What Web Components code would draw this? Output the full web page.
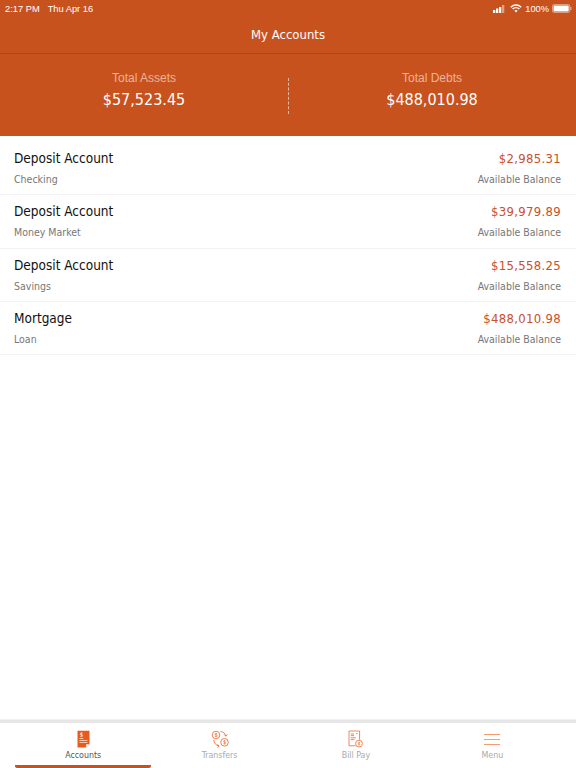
<!DOCTYPE html>
<html>
<head>
<meta charset="utf-8">
<title>My Accounts</title>
<style>
  html, body { margin: 0; padding: 0; height: 100%; background: #fff; }
  body { font-family: "DejaVu Sans", "Liberation Sans", sans-serif; font-stretch: condensed; overflow: hidden; }
  my-app { height: 768px; }
</style>
</head>
<body>
<my-app>
  <status-bar slot="top"></status-bar>
  <app-title slot="top">My Accounts</app-title>
  <total-summary slot="top">
    <total-item label="Total Assets" amount="$57,523.45"></total-item>
    <total-item label="Total Debts" amount="$488,010.98"></total-item>
  </total-summary>

  <account-row name="Deposit Account" type="Checking" amount="$2,985.31"></account-row>
  <account-row name="Deposit Account" type="Money Market" amount="$39,979.89"></account-row>
  <account-row name="Deposit Account" type="Savings" amount="$15,558.25"></account-row>
  <account-row name="Mortgage" type="Loan" amount="$488,010.98"></account-row>

  <tab-bar slot="bottom">
    <tab-item label="Accounts" active>
      <svg viewBox="0 0 14 18" width="14" height="18">
        <path d="M1.5 .8h12v13.4L10.2 17.6H1.5z" fill="#ea5a1c"/>
        <path d="M10.2 17.6v-3.4h3.3z" fill="#fff"/>
        <rect x="3.4" y="8" width="4" height="1" fill="#f9c6a8"/>
        <rect x="3.4" y="10" width="8" height="1" fill="#f9c6a8"/>
        <rect x="3.4" y="12" width="8" height="1" fill="#f9c6a8"/>
        <path d="M5.4 2.4v4M6.6 3.2H5a.8.8 0 0 0 0 1.6h.8a.8.8 0 0 1 0 1.6H4.3" fill="none" stroke="#fff" stroke-width=".7"/>
      </svg>
    </tab-item>
    <tab-item label="Transfers">
      <svg viewBox="0 0 18 18" width="18" height="18" fill="none" stroke="#f0703a" stroke-width=".9">
        <circle cx="5" cy="5" r="3.8"/>
        <circle cx="13.5" cy="12.3" r="3.8"/>
        <path d="M9.8 1.5c2.6.3 4.6 2 5 4.4M13.5 4.8l1.3 1.3 1.4-1.3M2.8 10.2c.1 2.8 2 5.2 5 5.8M6.6 17.2l1.4-1.2-1.2-1.4" stroke-linecap="round" stroke-linejoin="round"/>
        <path d="M6.1 3.5H4.6a.7.7 0 0 0 0 1.5h.8a.7.7 0 0 1 0 1.5H3.8M5 2.8v4.4M14.6 10.8h-1.5a.7.7 0 0 0 0 1.5h.8a.7.7 0 0 1 0 1.5h-1.6M13.5 10.1v4.4" stroke-width=".6"/>
      </svg>
    </tab-item>
    <tab-item label="Bill Pay">
      <svg viewBox="0 0 15 18" width="15" height="18" fill="none" stroke="#f0784a" stroke-width=".9">
        <path d="M7.4 15.8H1V1h10.6v8.8"/>
        <path d="M2.8 4h3.2M2.8 5.6h3.2M2.8 7.8h5M2.8 9.6h3.6M8 3.6h1.5"/>
        <circle cx="11" cy="13.6" r="3.4"/>
        <path d="M12 12.5h-1.2a.6.6 0 0 0 0 1.2h.5a.6.6 0 0 1 0 1.2h-1.2M11 11.8v3.7" stroke-width=".6"/>
      </svg>
    </tab-item>
    <tab-item label="Menu">
      <svg viewBox="0 0 16 18" width="16" height="18" fill="#f79a6c">
        <rect y="4" width="16" height="1"/>
        <rect y="9" width="16" height="1"/>
        <rect y="14" width="16" height="1"/>
      </svg>
    </tab-item>
  </tab-bar>
</my-app>

<script>
class MyApp extends HTMLElement {
  constructor() {
    super();
    this.attachShadow({ mode: "open" }).innerHTML = `
      <style>
        :host { display: flex; flex-direction: column; width: 100%; }
        .top { background: #c8521e; }
        .list { flex: 1; padding-top: 6px; }
      </style>
      <div class="top"><slot name="top"></slot></div>
      <div class="list"><slot></slot></div>
      <slot name="bottom"></slot>
    `;
  }
}

class StatusBar extends HTMLElement {
  constructor() {
    super();
    this.attachShadow({ mode: "open" }).innerHTML = `
      <style>
        :host {
          display: flex; justify-content: space-between; align-items: center;
          height: 17px; padding: 0 4px 0 5px; color: #fff;
          font: 9.3px "Liberation Sans", sans-serif; font-stretch: normal;
        }
        .left { display: flex; gap: 8px; }
        .right { display: flex; align-items: center; gap: 5px; }
        .pct { margin-left: -2px; margin-right: -2px; }
        svg { display: block; }
      </style>
      <div class="left"><span>2:17 PM</span><span>Thu Apr 16</span></div>
      <div class="right">
        <svg width="12" height="8" viewBox="0 0 12 8">
          <rect x="0" y="5" width="2.3" height="3" fill="#fff"/>
          <rect x="3" y="3.5" width="2.3" height="4.5" fill="#fff"/>
          <rect x="6" y="2" width="2.3" height="6" fill="#fff"/>
          <rect x="9" y="0" width="2.3" height="8" fill="#fff" opacity=".45"/>
        </svg>
        <svg width="12" height="9" viewBox="0 0 12 9" fill="none" stroke="#fff" stroke-width="1.4">
          <path d="M.8 3.2a7.4 7.4 0 0 1 10.4 0M2.6 5a4.8 4.8 0 0 1 6.8 0"/>
          <path d="M4.4 6.7a2.3 2.3 0 0 1 3.2 0L6 8.4z" fill="#fff" stroke="none"/>
        </svg>
        <span class="pct">100%</span>
        <svg width="20" height="9" viewBox="0 0 20 9">
          <rect x=".4" y=".4" width="17.4" height="8.2" rx="2" fill="none" stroke="#fff" stroke-opacity=".6" stroke-width=".8"/>
          <rect x="1.5" y="1.5" width="15.2" height="6" rx="1" fill="#fff"/>
          <rect x="18.4" y="3" width="1" height="3" fill="#fff" opacity=".6"/>
        </svg>
      </div>
    `;
  }
}

class AppTitle extends HTMLElement {
  constructor() {
    super();
    this.attachShadow({ mode: "open" }).innerHTML = `
      <style>
        :host {
          display: block; height: 36px; line-height: 35px; text-align: center;
          color: #fff; font-size: 13px;
          border-bottom: 1px solid #ad4519;
        }
      </style>
      <slot></slot>
    `;
  }
}

class TotalSummary extends HTMLElement {
  constructor() {
    super();
    this.attachShadow({ mode: "open" }).innerHTML = `
      <style>
        :host { display: grid; grid-template-columns: 1fr 1fr; height: 82px; position: relative; }
        .rule {
          position: absolute; left: 288px; top: 24px; height: 36px;
          border-left: 1px dashed #e8b8a0;
        }
      </style>
      <slot></slot>
      <div class="rule"></div>
    `;
  }
}

class TotalItem extends HTMLElement {
  constructor() {
    super();
    this.attachShadow({ mode: "open" }).innerHTML = `
      <style>
        :host { display: block; text-align: center; padding-top: 17px; }
        .label { color: #efb396; font: 12px/14px "Liberation Sans", sans-serif; font-stretch: normal; }
        .amount { color: #fff; font-size: 16px; line-height: 24px; margin-top: 3px; }
      </style>
      <div class="label">${this.getAttribute("label")}</div>
      <div class="amount">${this.getAttribute("amount")}</div>
    `;
  }
}

class AccountRow extends HTMLElement {
  constructor() {
    super();
    this.attachShadow({ mode: "open" }).innerHTML = `
      <style>
        :host {
          display: grid; grid-template-columns: 1fr auto; align-items: center;
          height: 53.3px; box-sizing: border-box; padding: 4px 15px 0 14px;
          border-bottom: 1px solid #f3f3f3; grid-template-rows: 24px 18px;
        }
        .name { color: #111; font-size: 13.5px; }
        .amount { color: #c8502a; font-size: 13px; letter-spacing: .3px; text-align: right; padding-top: 1px; }
        .sub { color: #777; font-size: 10.5px; }
        .sub.right { text-align: right; }
      </style>
      <div class="name">${this.getAttribute("name")}</div>
      <div class="amount">${this.getAttribute("amount")}</div>
      <div class="sub">${this.getAttribute("type")}</div>
      <div class="sub right">Available Balance</div>
    `;
  }
}

class TabBar extends HTMLElement {
  constructor() {
    super();
    this.attachShadow({ mode: "open" }).innerHTML = `
      <style>
        :host {
          display: grid; grid-template-columns: repeat(4, 1fr); height: 45px;
          padding: 0 15.5px 0 15px; background: #fff;
          border-top: 3px solid #e6e6e6; box-shadow: 0 -1px 1px #f1f1f1;
        }
      </style>
      <slot></slot>
    `;
  }
}

class TabItem extends HTMLElement {
  constructor() {
    super();
    const active = this.hasAttribute("active");
    this.attachShadow({ mode: "open" }).innerHTML = `
      <style>
        :host {
          display: flex; flex-direction: column; align-items: center;
          padding-top: 7px; box-sizing: border-box;
          border-bottom: 3px solid ${active ? "#c8521e" : "transparent"};
          border-radius: 0 0 2px 2px;
        }
        .icon { height: 18px; }
        svg, ::slotted(svg) { display: block; }
        .label { margin-top: 1px; font-size: 8.8px; line-height: 13px; color: ${active ? "#555" : "#aaa"}; }
      </style>
      <div class="icon"><slot></slot></div>
      <div class="label">${this.getAttribute("label")}</div>
    `;
  }
}

customElements.define("my-app", MyApp);
customElements.define("status-bar", StatusBar);
customElements.define("app-title", AppTitle);
customElements.define("total-summary", TotalSummary);
customElements.define("total-item", TotalItem);
customElements.define("account-row", AccountRow);
customElements.define("tab-bar", TabBar);
customElements.define("tab-item", TabItem);
</script>
</body>
</html>
